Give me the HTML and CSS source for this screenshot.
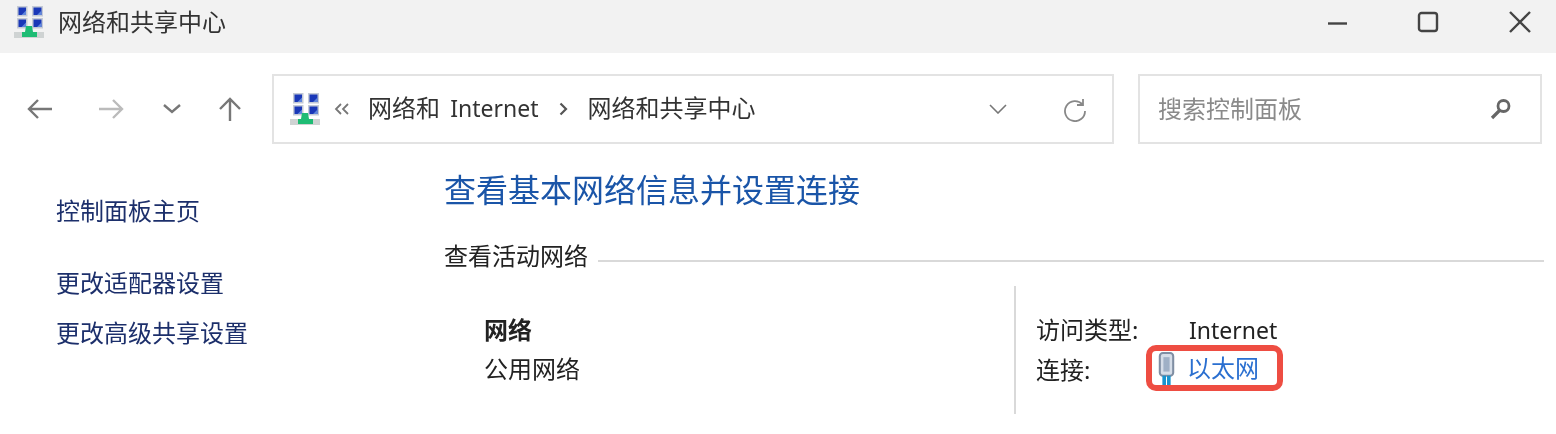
FILE: index.html
```html
<!DOCTYPE html>
<html>
<head>
  <meta charset="UTF-8">
  <link rel="stylesheet" href="styles.css">
</head>
<body>
  <svg class="defs" width="0" height="0">
    <symbol id="net" viewBox="0 0 30 32">
      <rect x="3" y="0" width="10.500" height="10.500" fill="#c4cad6"/>
      <rect x="18" y="0" width="11" height="10.500" fill="#c4cad6"/>
      <rect x="3" y="12" width="10.500" height="10.500" fill="#c4cad6"/>
      <rect x="18" y="12" width="11" height="10.500" fill="#c4cad6"/>
      <path d="M4.500 1.500h7.500v7.500H4.500zM19.500 1.500h8v7.500h-8zM4.500 13.500h7.500v7.500H4.500zM19.500 13.500h8v7.500h-8z" fill="#1a38b8"/>
      <path d="M12 4.500V9H7.500zM27.500 4.500V9H23zM12 16.500V21H7.500zM27.500 16.500V21H23z" fill="#5f86dc"/>
      <rect x="0" y="26" width="30" height="6" fill="#cfd3d3"/>
      <path d="M12 20h6l1 6h4v5H8v-5h3z" fill="#1ebc74"/>
    </symbol>
  </svg>

  <header class="titlebar">
    <svg class="app-icon"><use href="#net"/></svg>
    <span class="title">网络和共享中心</span>
    <div class="window-btns">
      <svg class="win-btn" viewBox="0 0 22 22"><path d="M3 12.500h19" stroke="#444" stroke-width="2.400"/></svg>
      <svg class="win-btn" viewBox="0 0 22 22"><rect x="2" y="2" width="18" height="18" rx="2.500" fill="none" stroke="#444" stroke-width="2.400"/></svg>
      <svg class="win-btn" viewBox="0 0 22 22"><path d="M1 1l20 20M21 1L1 21" stroke="#444" stroke-width="2.400"/></svg>
    </div>
  </header>

  <div class="toolbar">
    <nav class="nav-btns">
      <svg class="nav-btn back" viewBox="0 0 26 22"><path d="M25 11H2M11 2l-9 9 9 9" fill="none" stroke="#777" stroke-width="2.400"/></svg>
      <svg class="nav-btn forward" viewBox="0 0 26 22"><path d="M1 11h23M15 2l9 9-9 9" fill="none" stroke="#bbb" stroke-width="2.400"/></svg>
      <svg class="nav-btn recent" viewBox="0 0 18 10"><path d="M1 1l8 7 8-7" fill="none" stroke="#777" stroke-width="2.400"/></svg>
      <svg class="nav-btn up" viewBox="0 0 24 24"><path d="M12 24V2M2 12L12 2l10 10" fill="none" stroke="#777" stroke-width="2.400"/></svg>
    </nav>
    <div class="address">
      <svg class="addr-icon"><use href="#net"/></svg>
      <svg class="crumb-mark" viewBox="0 0 16 12"><path d="M7 1L2 6l5 5M14 1L9 6l5 5" fill="none" stroke="#777" stroke-width="1.800"/></svg>
      <span class="crumb">网络和 <span class="latin spaced">Internet</span></span>
      <svg class="crumb-sep" viewBox="0 0 9 14"><path d="M1.500 1.500L7 7l-5.500 5.500" fill="none" stroke="#555" stroke-width="2.200"/></svg>
      <span class="crumb">网络和共享中心</span>
      <svg class="addr-drop" viewBox="0 0 18 10"><path d="M1 1l8 8 8-8" fill="none" stroke="#777" stroke-width="1.600"/></svg>
      <svg class="addr-refresh" viewBox="0 0 24 24"><path d="M19.500 6.500A10 10 0 1 0 22 13M20 1v6h-6" fill="none" stroke="#888" stroke-width="1.800"/></svg>
    </div>
    <div class="search">
      <span class="search-text">搜索控制面板</span>
      <svg class="search-icon" viewBox="0 0 22 22"><circle cx="13.500" cy="8" r="5.500" fill="none" stroke="#666" stroke-width="2.800"/><path d="M9.500 12.500L2 20" stroke="#666" stroke-width="3.200"/></svg>
    </div>
  </div>

  <div class="content">
    <aside class="sidebar">
      <a class="side-link first">控制面板主页</a>
      <a class="side-link">更改适配器设置</a>
      <a class="side-link">更改高级共享设置</a>
    </aside>
    <main class="main">
      <h1 class="heading">查看基本网络信息并设置连接</h1>
      <div class="section-head">
        <span>查看活动网络</span>
        <div class="rule"></div>
      </div>
      <div class="network">
        <div class="net-name">
          <b>网络</b>
          <span>公用网络</span>
        </div>
        <div class="net-info">
          <div class="info-row"><span class="info-label">访问类型:</span><span class="latin">Internet</span></div>
          <div class="info-row">
            <span class="info-label">连接:</span>
            <span class="highlight">
              <svg class="plug" viewBox="0 0 16 32">
                <rect x="1.500" y="1" width="13" height="22" rx="3" fill="#d5dde8" stroke="#7f8ea3" stroke-width="2"/>
                <rect x="5" y="5" width="6" height="14" fill="#9fb0c6"/>
                <rect x="4" y="23" width="3.500" height="9" fill="#1793cf"/>
                <rect x="8.500" y="23" width="3.500" height="9" fill="#1793cf"/>
              </svg>
              <a class="link">以太网</a>
            </span>
          </div>
        </div>
      </div>
    </main>
  </div>
</body>
</html>
```

FILE: styles.css
```css
body {
  margin: 0;
  width: 1556px;
  height: 434px;
  overflow: hidden;
  background: #fff;
  color: #222;
  font-family: "Noto Sans", "Noto Sans CJK SC", sans-serif;
  font-size: 24px;
  line-height: 32px;
}
.defs {
  display: block;
}
.titlebar, .toolbar, .content {
  filter: blur(.6px);
}
.latin {
  font-size: 23px;
}
.spaced {
  margin-left: 4px;
}
.titlebar {
  height: 53px;
  box-sizing: border-box;
  background: #f2f2f2;
  display: flex;
  align-items: center;
  padding: 0 0 10px 14px;
}
.app-icon {
  width: 30px;
  height: 32px;
  margin-right: 14px;
}
.title {
  color: #333;
}
.window-btns {
  margin-left: auto;
  display: flex;
  gap: 70px;
  padding-right: 25px;
}
.win-btn {
  width: 22px;
  height: 22px;
}
.toolbar {
  height: 112px;
  display: flex;
  align-items: center;
}
.nav-btns {
  width: 272px;
  flex: none;
  display: flex;
  align-items: center;
  padding-left: 27px;
  box-sizing: border-box;
}
.nav-btn {
  flex: none;
  width: 26px;
  height: 22px;
}
.forward {
  margin-left: 45px;
}
.recent {
  width: 18px;
  height: 10px;
  margin-left: 39px;
}
.up {
  width: 24px;
  height: 24px;
  margin-left: 37px;
}
.address, .search {
  height: 70px;
  box-sizing: border-box;
  border: 2px solid #e3e3e3;
  display: flex;
  align-items: center;
}
.address {
  width: 842px;
  padding-left: 16px;
}
.addr-icon {
  width: 30px;
  height: 32px;
  margin-right: 14px;
}
.crumb-mark {
  width: 16px;
  height: 12px;
  margin-right: 18px;
}
.crumb {
  color: #333;
  margin-top: -3px;
}
.crumb-sep {
  width: 9px;
  height: 14px;
  margin: 0 20px;
}
.addr-drop {
  width: 18px;
  height: 10px;
  margin-left: auto;
}
.addr-refresh {
  width: 24px;
  height: 24px;
  margin: 2px 25px 0 56px;
}
.search {
  width: 404px;
  margin-left: 24px;
  padding: 0 28px 0 18px;
  justify-content: space-between;
}
.search-text {
  color: #8a8a8a;
}
.search-icon {
  width: 22px;
  height: 22px;
}
.content {
  display: grid;
  grid-template-columns: 444px 1fr;
}
.sidebar {
  padding: 30px 0 0 56px;
  display: flex;
  flex-direction: column;
}
.side-link {
  color: #1c2f6b;
  height: 50px;
}
.side-link.first {
  height: 72px;
}
.main {
  padding-right: 12px;
}
.heading {
  margin: 0;
  font-size: 32px;
  line-height: 50px;
  font-weight: normal;
  color: #1a55a8;
}
.section-head {
  display: flex;
  align-items: center;
  margin-top: 25px;
  height: 32px;
}
.rule {
  flex: 1;
  height: 2px;
  background: #d9d9d9;
  margin: 10px 0 0 10px;
}
.network {
  display: flex;
  margin-top: 14px;
}
.net-name {
  width: 570px;
  flex: none;
  box-sizing: border-box;
  padding: 28px 0 0 40px;
  display: flex;
  flex-direction: column;
  gap: 7px;
}
.net-info {
  height: 128px;
  box-sizing: border-box;
  flex: 1;
  border-left: 2px solid #d9d9d9;
  padding: 24px 0 0 20px;
}
.info-row {
  display: flex;
  align-items: center;
  height: 40px;
}
.info-label {
  width: 153px;
}
.highlight {
  display: flex;
  align-items: center;
  margin: 0 0 4px -43px;
  width: 137px;
  height: 46px;
  box-sizing: border-box;
  border: 6px solid #ee4d42;
  border-radius: 10px;
}
.plug {
  flex: none;
  width: 17px;
  height: 33px;
  margin: 0 12px 0 6px;
}
.link {
  color: #2a6fd0;
}
```
